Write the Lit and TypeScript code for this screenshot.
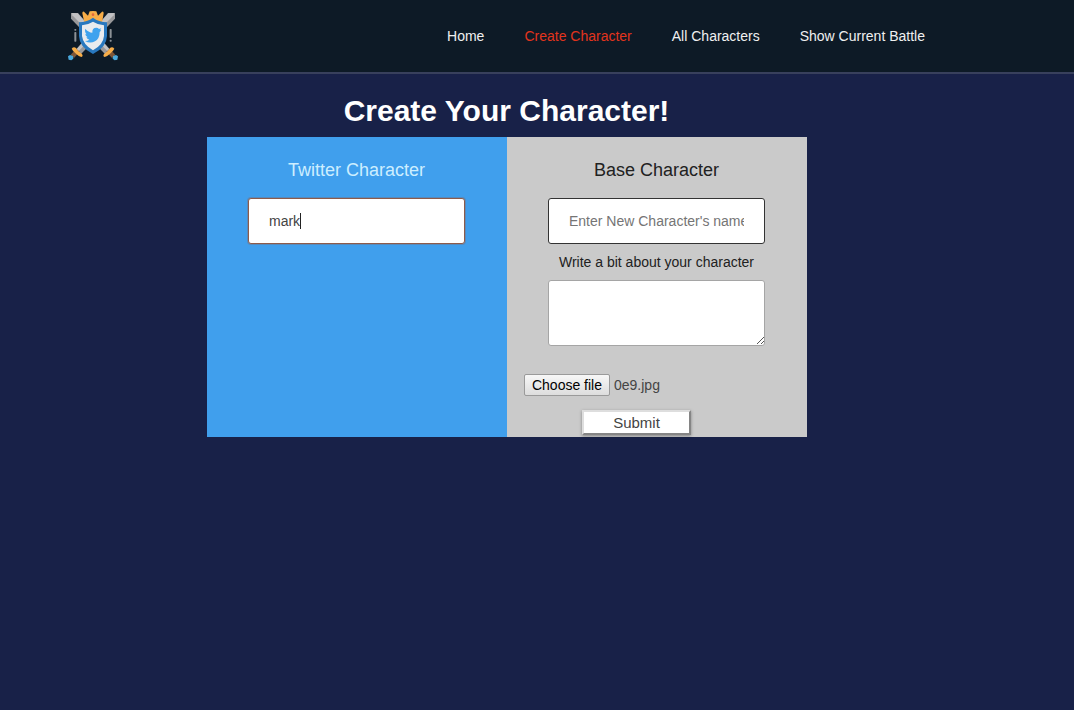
import { LitElement, html, css, svg } from "lit";
import { customElement, property } from "lit/decorators.js";

const sword = svg`
  <path d="M33 27 L54 27 L152 139 L137 152 L33 44 Z" fill="#98989a"/>
  <path d="M36 27 L53 28 L150 138 L144 143 L37 34 Z" fill="#c2c2c4"/>
  <path d="M139 143 L149 134 L166 152 L156 162 Z" fill="#7d5638"/>
  <path d="M133 149 Q127 156 134 159 Q143 156 150 149 Q160 141 163 134 Q157 127 150 132 Q145 142 133 149 Z" fill="#f7ad48"/>
  <path d="M159 156 L168 153 L174 157 L172 167 L164 169 L158 164 Z" fill="#4aa8dc"/>`;

@customElement("battle-logo")
export class BattleLogo extends LitElement {
  static styles = css`
    :host { display: block; width: 66px; height: 64px; }
    svg { display: block; }
  `;
  render() {
    return html`<svg width="66" height="64" viewBox="0 0 198 192">
      <g>${sword}</g>
      <g transform="translate(198 0) scale(-1 1)">${sword}</g>
      <path d="M67 28 Q67 21 72 23 L84 35 L89 22 Q99 20 109 22 L114 35 L126 23 Q131 21 131 28 L126 56 L73 56 Z" fill="#f7ad48"/>
      <circle cx="99" cy="32" r="4" fill="#e3683c"/>
      <path d="M99 41 Q116 54 141 55 L141 96 Q140 130 99 150 Q58 130 57 96 L57 55 Q82 54 99 41 Z" fill="#2878bf"/>
      <path d="M99 53 Q113 62 132 64 L132 96 Q130 122 99 139 Q69 122 66 96 L66 64 Q85 62 99 53 Z" fill="#e9ebee"/>
      <path d="M76 74 Q85 85 97 86 Q96 71 109 71 Q114 71 117 75 L124 73 L120 79 L124 79 L119 84 Q119 104 105 112 Q90 120 75 111 Q84 111 88 107 Q81 106 79 100 L83 100 Q76 96 76 90 L80 91 Q73 84 76 74 Z" fill="#3ea2ee"/>
      <g fill="#8b9196">
        <rect x="43" y="75" width="6" height="5" rx="2"/>
        <rect x="43" y="84" width="6" height="29" rx="2"/>
        <rect x="149" y="75" width="6" height="27" rx="2"/>
        <rect x="149" y="107" width="6" height="6" rx="2"/>
      </g>
    </svg>`;
  }
}

@customElement("site-header")
export class SiteHeader extends LitElement {
  @property() active = "";
  static styles = css`
    :host {
      display: flex; justify-content: space-between; box-sizing: border-box;
      height: 74px; padding: 4px 149px 0 60px;
      background: #0d1a26; border-bottom: 2px solid #38405c;
    }
    nav { display: flex; gap: 40px; padding-top: 22px; }
    a { font-size: 14px; line-height: 20px; color: #f0f0f0; white-space: nowrap; }
    a.active { color: #e2341d; }
  `;
  render() {
    const links = ["Home", "Create Character", "All Characters", "Show Current Battle"];
    return html`<battle-logo></battle-logo>
      <nav>${links.map((l) => html`<a class=${l === this.active ? "active" : ""}>${l}</a>`)}</nav>`;
  }
}

@customElement("app-root")
export class AppRoot extends LitElement {
  static styles = css`
    :host {
      display: block; height: 710px; overflow: hidden; background: #182148;
      font-family: "Liberation Sans", Arial, sans-serif; color: #212121;
    }
    main { width: 600px; margin-left: 207px; padding-top: 20px; }
    h1 { margin: 0 1px 0 0; font-size: 30px; line-height: 34px; height: 43px; text-align: center; color: #fff; white-space: nowrap; }
    .panels { display: grid; grid-template-columns: 300px 300px; height: 300px; }
    .panel { display: flex; flex-direction: column; align-items: center; padding-top: 22px; }
    .twitter { background: #409fed; }
    .base { background: #cacaca; }
    h2 { margin: 0 1px 17px 0; font-weight: 400; font-size: 18px; line-height: 22px; }
    .twitter h2 { color: #cdeeff; }
    .field {
      box-sizing: border-box; width: 217px; height: 46px; padding: 0 20px; margin-right: 1px;
      display: flex; align-items: center; background: #fff;
      border: 1px solid #333; border-radius: 3px; font-size: 14px; color: #444;
    }
    .focused { border-color: #8d5b4b; box-shadow: 0 0 0 1px rgba(141, 91, 75, 0.3); }
    .caret { width: 1px; height: 16px; background: #222; }
    .clip { overflow: hidden; white-space: nowrap; color: #757575; line-height: 18px; }
    .label { font-size: 14px; line-height: 18px; margin: 9px 1px 9px 0; }
    .area {
      box-sizing: border-box; width: 217px; height: 66px; margin-right: 1px; background: #fff;
      border: 1px solid #a5a5a5; border-radius: 3px;
      display: flex; align-items: flex-end; justify-content: flex-end;
    }
    .file { align-self: flex-start; margin: 28px 0 14px 17px; display: flex; align-items: center; gap: 4px; font-size: 14px; color: #444; }
    .choose {
      box-sizing: border-box; width: 86px; height: 22px; padding: 0; border: 1px solid #9a9a9a; border-radius: 2px;
      background: linear-gradient(#f7f7f7, #dddddd); font: 14px "Liberation Sans", sans-serif; color: #000;
    }
    .submit {
      box-sizing: border-box; width: 109px; height: 25px; padding: 0; margin-right: 41px; margin-left: 0;
      background: #fff; border: 2px solid; border-color: #dedede #858585 #858585 #dedede;
      font: 15px "Liberation Sans", sans-serif; color: #444; box-shadow: 0 1px 3px rgba(0, 0, 0, 0.35);
    }
  `;
  render() {
    return html`
      <site-header active="Create Character"></site-header>
      <main>
        <h1>Create Your Character!</h1>
        <div class="panels">
          <section class="panel twitter">
            <h2>Twitter Character</h2>
            <div class="field focused"><span>mark</span><span class="caret"></span></div>
          </section>
          <section class="panel base">
            <h2>Base Character</h2>
            <div class="field"><span class="clip">Enter New Character's name</span></div>
            <div class="label">Write a bit about your character</div>
            <div class="area">
              <svg width="9" height="9" viewBox="0 0 9 9" shape-rendering="crispEdges" fill="#555">
                ${[0, 1, 2, 3, 4, 5, 6].map((i) => svg`<rect x=${2 + i} y=${7 - i} width="1" height="1"/>`)}
                ${[0, 1, 2].map((i) => svg`<rect x=${6 + i} y=${7 - i} width="1" height="1"/>`)}
              </svg>
            </div>
            <div class="file"><button class="choose">Choose file</button><span>0e9.jpg</span></div>
            <button class="submit">Submit</button>
          </section>
        </div>
      </main>`;
  }
}
